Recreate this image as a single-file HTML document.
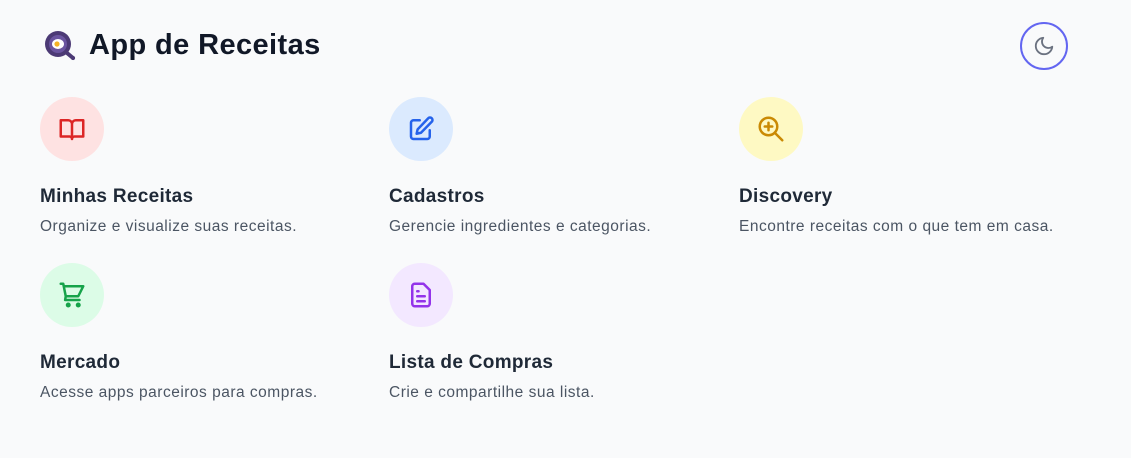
<!DOCTYPE html>
<html><head><meta charset="utf-8"><style>
*{margin:0;padding:0;box-sizing:border-box}
body{width:1131px;height:458px;background:#f9fafb;font-family:"Liberation Sans",sans-serif;position:relative;overflow:hidden}
.h{position:absolute;left:89px;top:29px;font-size:29px;font-weight:bold;color:#111827;letter-spacing:0.4px}
.logo{position:absolute;left:44px;top:30px}
.moon{position:absolute;left:1020px;top:22px;width:48px;height:48px;border-radius:50%;border:2px solid #6366f1;display:flex;align-items:center;justify-content:center}
.card{position:absolute;width:340px}
.ic{width:64px;height:64px;border-radius:50%;display:flex;align-items:center;justify-content:center}
.t{margin-top:25px;font-size:19px;font-weight:bold;color:#1f2937;height:24px;letter-spacing:0.3px}
.d{margin-top:8px;font-size:15.5px;color:#4b5563;letter-spacing:0.5px}
</style></head><body>
<svg class="logo" width="34" height="32" viewBox="0 0 34 32"><circle cx="14" cy="14" r="13" fill="#4c3a75"/><circle cx="14" cy="14" r="9" fill="#6b55a0"/><ellipse cx="14" cy="14" rx="6" ry="5" fill="#fff"/><circle cx="13" cy="14" r="2.6" fill="#f5b324"/><path d="M23 23l6 5" stroke="#4c3a75" stroke-width="4" stroke-linecap="round"/><circle cx="29" cy="28" r="2" fill="#4c3a75"/></svg>
<div class="h">App de Receitas</div>
<div class="moon"><svg width="22" height="22" viewBox="0 0 24 24" fill="none" stroke="#6b7280" stroke-width="2" stroke-linecap="round" stroke-linejoin="round"><path d="M21 12.8A9 9 0 1 1 11.2 3a7 7 0 0 0 9.8 9.8z"/></svg></div>

<div class="card" style="left:40px;top:97px"><div class="ic" style="background:#fee2e2"><svg width="30" height="30" viewBox="0 0 24 24" fill="none" stroke="#dc2626" stroke-width="2" stroke-linejoin="round"><path d="M3 5h6a3 3 0 0 1 3 3v12a2 2 0 0 0-2-2H3zM21 5h-6a3 3 0 0 0-3 3v12a2 2 0 0 1 2-2h7z"/></svg></div><div class="t">Minhas Receitas</div><div class="d">Organize e visualize suas receitas.</div></div>

<div class="card" style="left:389px;top:97px"><div class="ic" style="background:#dbeafe"><svg width="30" height="30" viewBox="0 0 24 24" fill="none" stroke="#2563eb" stroke-width="2" stroke-linecap="round" stroke-linejoin="round"><path d="M11 5H6a2 2 0 0 0-2 2v11a2 2 0 0 0 2 2h11a2 2 0 0 0 2-2v-5"/><path d="M17.6 3.6a2 2 0 1 1 2.8 2.8L12 15l-3.5.8.8-3.5z"/></svg></div><div class="t">Cadastros</div><div class="d">Gerencie ingredientes e categorias.</div></div>

<div class="card" style="left:739px;top:97px"><div class="ic" style="background:#fef9c3"><svg width="30" height="30" viewBox="0 0 24 24" fill="none" stroke="#ca8a04" stroke-width="2" stroke-linecap="round"><circle cx="10" cy="10" r="7"/><path d="M21 21l-6-6M10 7v6M7 10h6"/></svg></div><div class="t">Discovery</div><div class="d">Encontre receitas com o que tem em casa.</div></div>

<div class="card" style="left:40px;top:263px"><div class="ic" style="background:#dcfce7"><svg width="30" height="30" viewBox="0 0 24 24" fill="none" stroke="#16a34a" stroke-width="2" stroke-linecap="round" stroke-linejoin="round"><path d="M3 3h2l.4 2M7 13h10l4-8H5.4M7 13L5.4 5M7 13l-.5 3H18"/><circle cx="9" cy="20" r="1" fill="#16a34a"/><circle cx="17" cy="20" r="1" fill="#16a34a"/></svg></div><div class="t">Mercado</div><div class="d">Acesse apps parceiros para compras.</div></div>

<div class="card" style="left:389px;top:263px"><div class="ic" style="background:#f3e8ff"><svg width="30" height="30" viewBox="0 0 24 24" fill="none" stroke="#9333ea" stroke-width="2" stroke-linecap="round" stroke-linejoin="round"><path d="M7 3h7l5 5v11a2 2 0 0 1-2 2H7a2 2 0 0 1-2-2V5a2 2 0 0 1 2-2z"/><path d="M9 9h1M9 13h6M9 17h6"/></svg></div><div class="t">Lista de Compras</div><div class="d">Crie e compartilhe sua lista.</div></div>
</body></html>
